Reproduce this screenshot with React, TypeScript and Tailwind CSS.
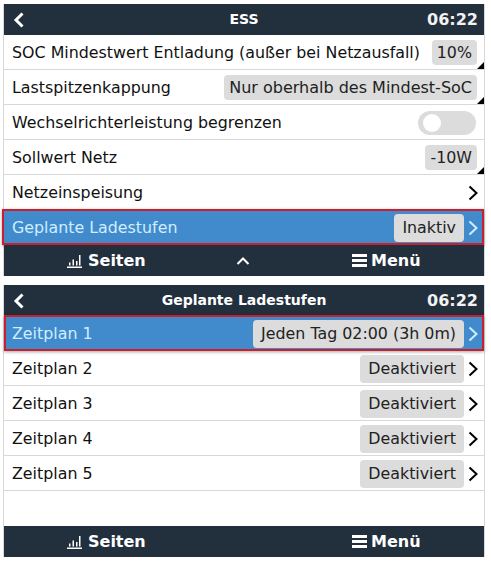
import React, { ReactNode } from "react";

const Chevron = ({ color = "#000" }: { color?: string }) => (
  <svg width="12" height="16" viewBox="0 0 12 16" className="ml-[3px] shrink-0">
    <path d="M2.5 1.5 L9.5 8 L2.5 14.5" fill="none" stroke={color} strokeWidth="2" />
  </svg>
);

const BackIcon = () => (
  <svg width="12" height="18" viewBox="0 0 12 18" className="shrink-0">
    <path d="M9.5 2.5 L3 9 L9.5 15.5" fill="none" stroke="#fff" strokeWidth="3" />
  </svg>
);

const BarsIcon = () => (
  <svg width="15" height="14" viewBox="0 0 15 14" className="shrink-0">
    <path d="M0 12.5h15v1.5H0z M2 8.5h1.5v3H2z M5.5 5.5H7v6H5.5z M9 7h1.5v4.5H9z M12 1h1.5v10.5H12z" fill="#fff" />
  </svg>
);

const MenuIcon = () => (
  <svg width="15" height="13" viewBox="0 0 15 13" className="shrink-0">
    <path d="M0 0h15v3H0z M0 5h15v3H0z M0 10h15v3H0z" fill="#fff" />
  </svg>
);

const UpIcon = () => (
  <svg width="14" height="10" viewBox="0 0 14 10" className="shrink-0">
    <path d="M1.5 8 L7 2.5 L12.5 8" fill="none" stroke="#fff" strokeWidth="2" />
  </svg>
);

// value box with the small corner triangle, sits 7px off the right edge
const EditValue = ({ children }: { children: ReactNode }) => (
  <div className="relative mr-[2px] flex h-[25px] items-center rounded-sm bg-[#dcdcdc] px-[5px] text-[#222]">
    {children}
    <span className="absolute right-[-7px] bottom-[-4px] h-0 w-0 border-b-[7px] border-l-[7px] border-b-black border-l-transparent" />
  </div>
);

const LinkValue = ({ children }: { children: ReactNode }) => (
  <div className="flex h-[28px] items-center rounded-sm bg-[#dcdcdc] px-2 text-[#222]">{children}</div>
);

const Row = ({
  label,
  selected,
  wideMark,
  children,
}: {
  label: string;
  selected?: boolean;
  wideMark?: boolean;
  children?: ReactNode;
}) => (
  <div
    className={`relative flex h-[35px] items-center justify-between pr-[5px] pl-2 ${
      selected ? "bg-[#418bcd] text-[#cfeeff]" : "border-b border-[#d8d8d8] pt-[1px] text-[#111]"
    }`}
  >
    <span>{label}</span>
    <div className="flex items-center">{children}</div>
    {selected && (
      <span
        className={`pointer-events-none absolute -top-[1px] right-0 bottom-0 border-2 border-[#c8202c] shadow-[0_1px_3px_rgba(0,0,0,0.35)] ${
          wideMark ? "-left-[2px]" : "left-0"
        }`}
      />
    )}
  </div>
);

const Header = ({ title }: { title: string }) => (
  <div className="relative flex h-[31px] items-center justify-center bg-[#222f3d] text-[14px] font-bold text-white">
    <span className="absolute left-[9px] flex items-center">
      <BackIcon />
    </span>
    {title}
    <span className="absolute right-[6px] text-[16px] text-[#f2f2f2]">06:22</span>
  </div>
);

const Footer = ({ up }: { up?: boolean }) => (
  <div className="relative flex h-[31px] items-center bg-[#222f3d] text-[16px] font-bold text-white">
    <div className="absolute left-[63px] flex items-center gap-[6px]">
      <BarsIcon />
      Seiten
    </div>
    {up && (
      <span className="absolute left-[232px] flex items-center">
        <UpIcon />
      </span>
    )}
    <div className="absolute left-[348px] flex items-center gap-1">
      <MenuIcon />
      Menü
    </div>
  </div>
);

const Toggle = () => (
  <div className="mr-[3px] flex h-[24px] w-[58px] items-center rounded-full bg-[#dcdcdc] pl-[5px]">
    <span className="h-[18px] w-[18px] rounded-full bg-white" />
  </div>
);

const schedules = ["Zeitplan 2", "Zeitplan 3", "Zeitplan 4", "Zeitplan 5"];

export default function App() {
  return (
    <div
      className="flex h-[561px] w-[491px] flex-col gap-[9px] bg-white pt-1 pl-[3px] text-[15.85px]"
      style={{ fontFamily: '"DejaVu Sans", sans-serif' }}
    >
      <div className="h-[272px] w-[482px] border-x border-x-[#d8d8d8]">
        <Header title="ESS" />
        <Row label="SOC Mindestwert Entladung (außer bei Netzausfall)">
          <EditValue>10%</EditValue>
        </Row>
        <Row label="Lastspitzenkappung">
          <EditValue>
            <span className="text-[16px]">Nur oberhalb des Mindest-SoC</span>
          </EditValue>
        </Row>
        <Row label="Wechselrichterleistung begrenzen">
          <Toggle />
        </Row>
        <Row label="Sollwert Netz">
          <EditValue>-10W</EditValue>
        </Row>
        <Row label="Netzeinspeisung">
          <Chevron />
        </Row>
        <Row label="Geplante Ladestufen" selected wideMark>
          <LinkValue>Inaktiv</LinkValue>
          <Chevron color="#cfeeff" />
        </Row>
        <Footer up />
      </div>

      <div className="flex h-[272px] w-[482px] flex-col border-x border-x-[#d8d8d8]">
        <Header title="Geplante Ladestufen" />
        <Row label="Zeitplan 1" selected>
          <LinkValue>Jeden Tag 02:00 (3h 0m)</LinkValue>
          <Chevron color="#cfeeff" />
        </Row>
        {schedules.map((s) => (
          <Row key={s} label={s}>
            <LinkValue>Deaktiviert</LinkValue>
            <Chevron />
          </Row>
        ))}
        <div className="flex-1" />
        <Footer />
      </div>
    </div>
  );
}
